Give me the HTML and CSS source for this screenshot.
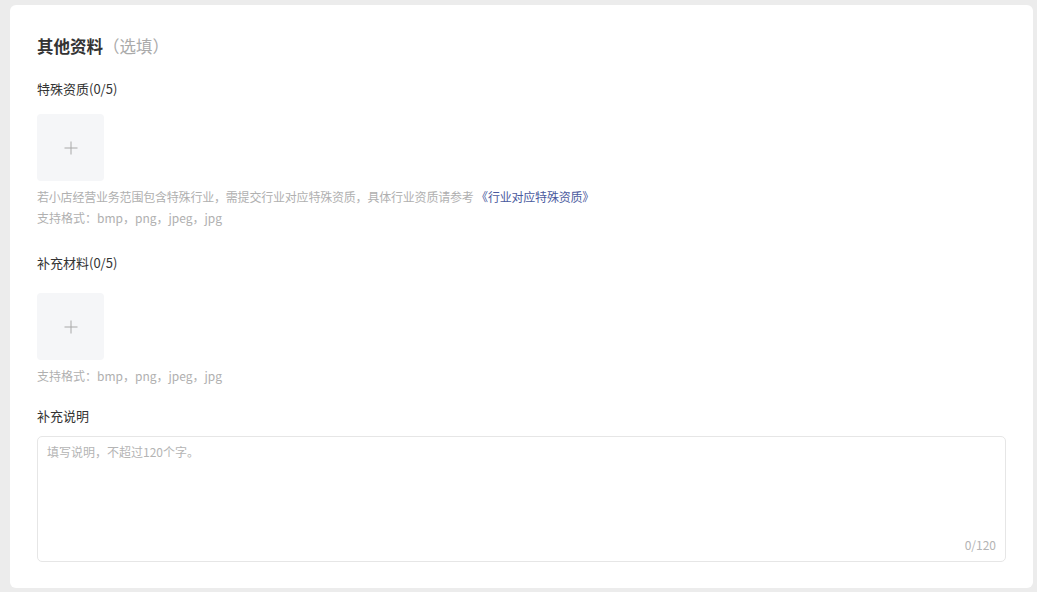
FILE: index.html
```html
<!DOCTYPE html>
<html lang="zh-CN">
<head>
<meta charset="utf-8">
<title>其他资料</title>
<link rel="stylesheet" href="styles.css">
</head>
<body>
<div class="card">
  <h2 class="title">其他资料<span class="optional">（选填）</span></h2>

  <div class="field field-first">
    <div class="label">特殊资质(0/5)</div>
    <div class="upload upload-first">
      <svg class="plus" width="14" height="14" viewBox="0 0 14 14"><path d="M7 0.5V13.5M0.5 7H13.5" stroke="#a8a8a8" stroke-width="1" fill="none"/></svg>
    </div>
    <div class="hint hint-long">若小店经营业务范围包含特殊行业，需提交行业对应特殊资质，具体行业资质请参考 <a class="link" href="#">《行业对应特殊资质》</a></div>
    <div class="hint">支持格式：bmp，png，jpeg，jpg</div>
  </div>

  <div class="field field-second">
    <div class="label">补充材料(0/5)</div>
    <div class="upload upload-second">
      <svg class="plus" width="14" height="14" viewBox="0 0 14 14"><path d="M7 0.5V13.5M0.5 7H13.5" stroke="#a8a8a8" stroke-width="1" fill="none"/></svg>
    </div>
    <div class="hint">支持格式：bmp，png，jpeg，jpg</div>
  </div>

  <div class="field field-third">
    <div class="label">补充说明</div>
    <div class="textarea">
      <div class="placeholder">填写说明，不超过120个字。</div>
      <div class="counter">0/120</div>
    </div>
  </div>
</div>
</body>
</html>
```

FILE: styles.css
```css
html, body {
  margin: 0;
  padding: 0;
}
body {
  background: #ececec;
  font-family: "Noto Sans CJK SC", "Noto Sans", sans-serif;
  color: #333;
  height: 592px;
  overflow: hidden;
}
.card {
  margin: 5px 4px 0 10px;
  height: 583px;
  box-sizing: border-box;
  background: #fff;
  border-radius: 6px;
  padding: 30px 27px 0 27px;
}
.title {
  margin: 0;
  font-size: 16.5px;
  line-height: 22px;
  font-weight: 700;
  color: #333;
}
.optional {
  font-weight: 400;
  color: #aaa;
}
.field-first {
  margin-top: 22px;
}
.label {
  font-size: 13px;
  line-height: 20px;
  color: #333;
}
.upload {
  width: 67px;
  height: 67px;
  background: #f5f6f8;
  border-radius: 4px;
  display: flex;
  align-items: center;
  justify-content: center;
}
.upload-first {
  margin-top: 15px;
}
.upload-second {
  margin-top: 20px;
}
.hint {
  font-size: 12px;
  line-height: 21px;
  color: #b0b0b0;
}
.hint-long {
  letter-spacing: -0.2px;
}
.upload + .hint {
  margin-top: 5px;
}
.link {
  color: #4a5a9e;
  text-decoration: none;
}
.field-second {
  margin-top: 25px;
}
.field-third {
  margin-top: 20px;
}
.textarea {
  margin-top: 10px;
  height: 126px;
  box-sizing: border-box;
  border: 1px solid #e6e6e6;
  border-radius: 5px;
  padding: 5px 9px 6px 9px;
  display: flex;
  flex-direction: column;
  justify-content: space-between;
}
.placeholder {
  font-size: 12px;
  line-height: 20px;
  color: #b4b4b4;
}
.counter {
  align-self: flex-end;
  font-size: 12px;
  line-height: 20px;
  color: #b4b4b4;
}
```
